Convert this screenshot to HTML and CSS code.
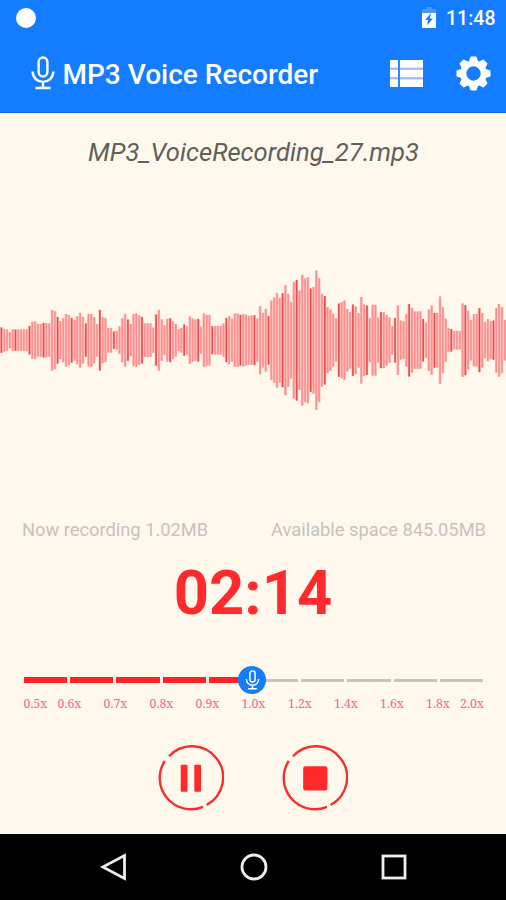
FILE: index.html
```html
<!DOCTYPE html>
<html lang="en">
<head>
<meta charset="utf-8">
<title>MP3 Voice Recorder</title>
<link rel="stylesheet" href="styles.css">
</head>
<body>
<svg class="defs" aria-hidden="true">
  <symbol id="mic" viewBox="0 0 24 34">
    <rect x="7.6" y="1.5" width="8.8" height="19" rx="4.4"/>
    <path d="M1.6 15.5C2 29.3 22 29.3 22.4 15.5M12 26v6M4.5 32h15"/>
  </symbol>
</svg>
<header class="header">
  <div class="status">
    <span class="dot"></span>
    <div class="status-right">
      <svg class="battery" viewBox="0 0 14 21"><path d="M4 0h6v2h4v4H0V2h4z" fill="#4a98ff"/><path d="M0 6h14v15H0z" fill="#fff"/><path d="M9 6 3.2 13h3L5 18.5l6-7H7.7z" fill="#147cff"/></svg>
      <span class="clock">11:48</span>
    </div>
  </div>
  <div class="toolbar">
    <svg class="mic-title"><use href="#mic"/></svg>
    <h1>MP3 Voice Recorder</h1>
    <svg class="list" viewBox="0 0 33 27"><path d="M0 0h33v27H0z" fill="#a9bdfa"/><path d="M0 0h8v7.5H0zM10 0h23v7.5H10zM0 10h8v7H0zM10 10h23v7H10zM0 19.5h8V27H0zM10 19.5h23V27H10z" fill="#fff"/><path d="M8 0h2v27H8z" fill="#2e85ff"/></svg>
    <svg class="gear" viewBox="-17.5 -17.5 35 35">
      <circle r="10.2"/>
      <g id="teeth"><path id="tooth" d="M-4.6-12 -3.2-16.2Q-3-17-2.2-17H2.2Q3-17 3.2-16.2L4.6-12z"/><use href="#tooth" transform="rotate(45)"/><use href="#tooth" transform="rotate(90)"/><use href="#tooth" transform="rotate(135)"/><use href="#tooth" transform="rotate(180)"/><use href="#tooth" transform="rotate(225)"/><use href="#tooth" transform="rotate(270)"/><use href="#tooth" transform="rotate(315)"/></g>
    </svg>
  </div>
</header>
<main>
  <div class="filename">MP3_VoiceRecording_27.mp3</div>
  <svg class="wave" id="wave" viewBox="0 0 506 150"></svg>
  <div class="info"><span class="used">Now recording 1.02MB</span><span class="free">Available space 845.05MB</span></div>
  <div class="timer">02:14</div>
  <div class="speed">
    <div class="track">
      <i class="on"></i><i class="on"></i><i class="on"></i><i class="on"></i><i class="on"></i><i></i><i></i><i></i><i></i><i></i>
      <span class="thumb"><svg><use href="#mic"/></svg></span>
    </div>
    <div class="labels"><span>0.5x</span><span>0.6x</span><span>0.7x</span><span>0.8x</span><span>0.9x</span><span>1.0x</span><span>1.2x</span><span>1.4x</span><span>1.6x</span><span>1.8x</span><span>2.0x</span></div>
  </div>
  <div class="controls">
    <svg viewBox="0 0 66 66"><path class="ring" d="M11 11.3A31.2 31.2 0 1 1 48.6 60M45 61.8A31.2 31.2 0 0 1 6.8 16"/><rect x="22.7" y="19.7" width="6.8" height="27" rx="1"/><rect x="36.3" y="19.7" width="6.8" height="27" rx="1"/></svg>
    <svg viewBox="0 0 66 66"><path class="ring" d="M11 11.3A31.2 31.2 0 1 1 48.6 60M45 61.8A31.2 31.2 0 0 1 6.8 16"/><rect x="21.2" y="21.2" width="24.2" height="24.2" rx="2"/></svg>
  </div>
</main>
<nav>
  <svg viewBox="0 0 28 28"><path d="M24.5 2.5v23L2.8 14z"/></svg>
  <svg viewBox="0 0 28 28"><circle cx="14" cy="14" r="12"/></svg>
  <svg viewBox="0 0 28 28"><rect x="3" y="3" width="22" height="22"/></svg>
</nav>
<script src="wave.js"></script>
</body>
</html>
```
FILE: wave.js
```js
// Half-heights of the waveform bars, in thirds of a pixel.
const levels = [
  38,34,32,24,33,32,32,32,32,33, 43,55,57,49,49,52,51,50,91,87,
  70,57,66,79,75,67,61,72,82,70, 50,79,79,70,49,91,69,66,37,37,
  26,28,41,66,79,62,48,78,80,74, 70,50,51,50,38,77,91,62,45,64,
  66,57,49,33,37,47,43,71,65,62, 64,41,80,76,76,42,43,43,43,50,
  66,72,65,80,80,76,79,77,73,74, 75,65,102,82,94,73,119,128,142,127,
  141,165,139,115,175,181,149,196,186,189, 155,160,209,186,139,133,99,92,80,65,
  110,114,119,94,85,107,101,82,130,107, 104,66,106,106,68,84,84,76,68,43,
  67,104,59,57,79,109,97,86,86,86, 64,53,92,104,82,82,131,99,65,36,
  34,28,28,28,110,105,88,61,78,79, 96,82,54,63,57,59,97,109,99,61
];
const accents = new Set([0, 5, 10, 15, 20, 25, 30, 35, 40, 45, 50, 55, 60, 65, 70, 75, 80, 85, 90, 95,
  100, 105, 110, 115, 120, 125, 130, 135, 140, 145, 150, 154, 160, 165, 170, 175]);
const step = 2.812, middle = 75.2;
document.getElementById('wave').innerHTML = levels.map((v, i) => {
  const h = v / 3, x = 1.4 + i * step;
  const y = (middle - h).toFixed(1), height = (2 * h).toFixed(1);
  return `<rect class="halo" x="${(x - 1.4).toFixed(2)}" y="${y}" width="2.82" height="${height}"/>` +
    `<rect class="${accents.has(i) ? 'accent' : 'bar'}" x="${(x - 0.8).toFixed(2)}" y="${y}" width="1.6" height="${height}"/>`;
}).join('');
```
FILE: styles.css
```css
* { box-sizing: border-box; }
body { margin: 0; width: 506px; height: 900px; overflow: hidden; display: flex; flex-direction: column; background: #fff9ed; font-family: Roboto, sans-serif; }
svg { display: block; flex: none; }
.defs { width: 0; height: 0; position: absolute; }
.header { height: 113px; background: #147cff; border-bottom: 1px solid #1268dc; color: #fff; }
.status { height: 36px; display: flex; justify-content: space-between; padding: 0 11px 0 16px; align-items: center; }
.dot { width: 20px; height: 20px; border-radius: 50%; background: #fff; margin-top: -1px; }
.status-right { display: flex; align-items: center; gap: 10px; }
.battery { width: 14px; height: 21px; margin-top: -1px; }
.clock { font-size: 19.5px; font-weight: 500; line-height: 36px; margin-top: 2px; width: 49px; white-space: nowrap; }
.toolbar { height: 76px; display: flex; align-items: center; padding: 0 15px 0 31px; }
.mic-title { width: 24px; height: 34px; margin-top: -2px; fill: none; stroke: #fff; stroke-width: 2.4; }
h1 { margin: 1px 0 0 7.5px; flex: 1; font-size: 28px; font-weight: 500; white-space: nowrap; }
.list { width: 33px; height: 27px; margin: -1px 33px 0 0; }
.gear { width: 35px; height: 35px; margin-top: -2px; fill: #fff; }
.gear circle { fill: none; stroke: #fff; stroke-width: 6; }
main { height: 721px; display: flex; flex-direction: column; }
.filename { margin-top: 22px; height: 34px; line-height: 34px; padding-left: 1px; text-align: center; font-size: 25.6px; font-style: italic; color: #626059; }
.wave { width: 506px; height: 150px; margin-top: 96px; }
.halo { fill: #ffbfbb; }
.bar { fill: #fa9090; }
.accent { fill: #eb4a49; }
.info { display: flex; justify-content: space-between; padding: 0 20px 0 22px; margin-top: 103px; height: 24px; line-height: 24px; font-size: 18.3px; color: #c5c3be; }
.timer { height: 76px; line-height: 76px; margin-top: 13px; text-align: center; font-size: 61.5px; font-weight: 700; color: #ff2a2d; }
.speed { margin: 35px 22px 0; }
.track { position: relative; height: 28px; margin: 0 1px 0 2px; display: flex; align-items: center; gap: 3px; }
.track i { flex: 1; height: 3px; background: #c6c4bc; }
.track i.on { height: 6px; background: #fc2424; }
.thumb { position: absolute; left: 214px; top: 0; width: 28px; height: 28px; border-radius: 50%; background: #147cff; display: flex; align-items: center; justify-content: center; }
.thumb svg { width: 15px; height: 20px; fill: none; stroke: #fff; stroke-width: 2.5; }
.labels { display: grid; grid-template-columns: 25px 43px 49px 43px 49px 43px 50px 42px 50px 42px 26px; height: 20px; line-height: 20px; padding-left: 1px; font-family: "Noto Serif", "DejaVu Serif", serif; font-size: 12.3px; color: #f86490; text-align: center; }
.labels span { white-space: nowrap; }
.controls { display: flex; justify-content: center; gap: 58px; margin-top: 31px; }
.controls svg { width: 66px; height: 66px; fill: #ff292a; }
.controls .ring { fill: none; stroke: #f52e2e; stroke-width: 2.4; }
nav { height: 66px; background: #000; display: flex; align-items: center; justify-content: center; gap: 112px; padding-left: 2px; }
nav svg { width: 28px; height: 28px; fill: none; stroke: #eee; stroke-width: 2.8; }
```
